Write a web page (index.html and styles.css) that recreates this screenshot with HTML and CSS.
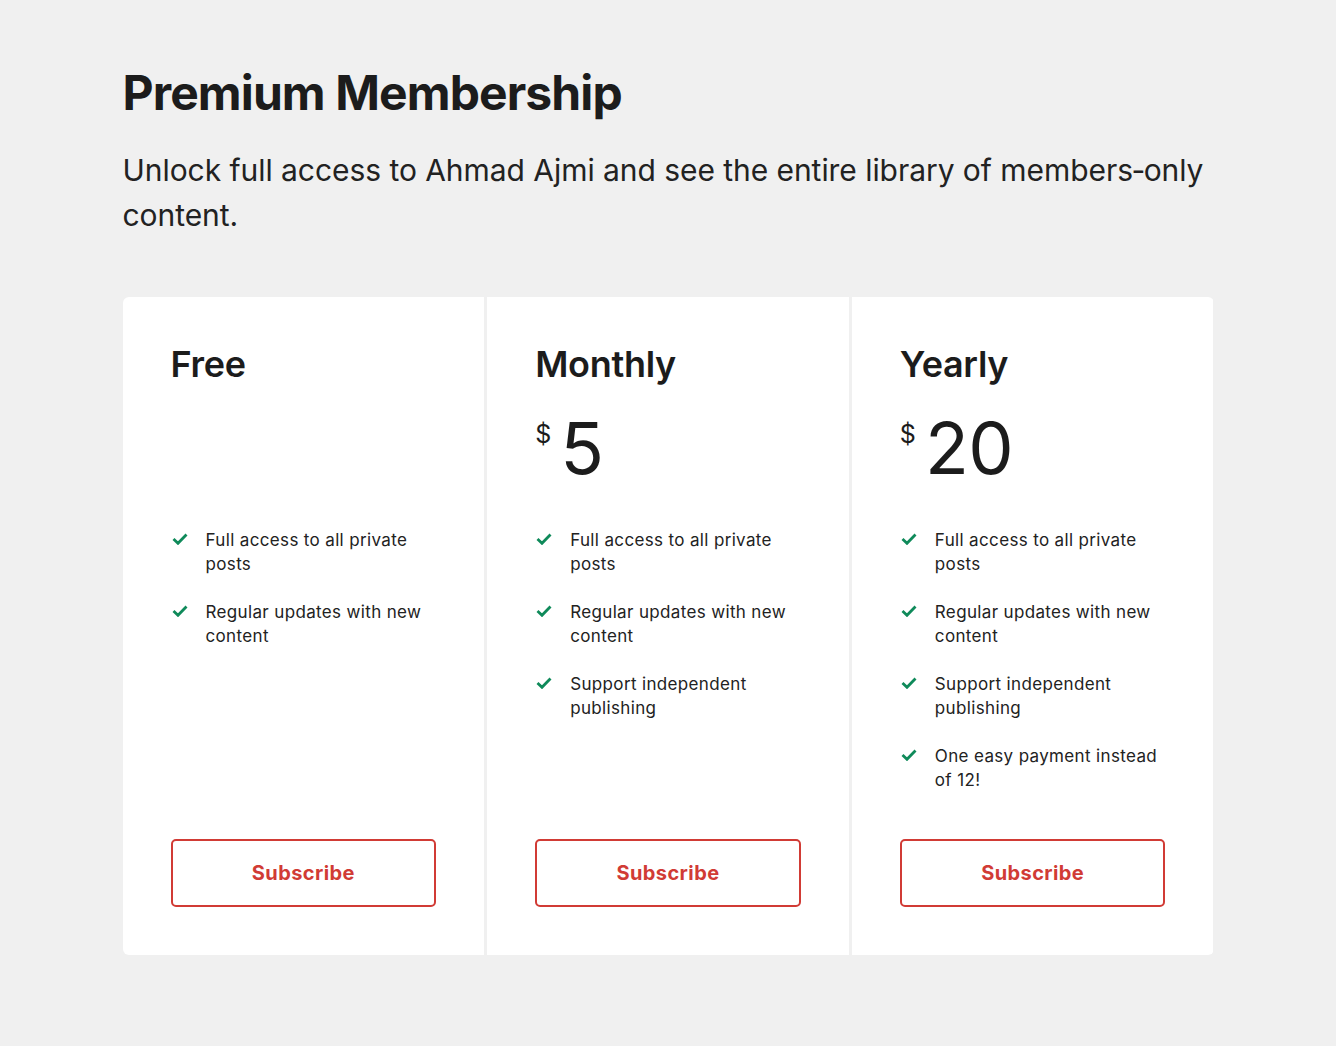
FILE: index.html
```html
<!DOCTYPE html>
<html lang="en">

<head>
    <meta charset="UTF-8">
    <meta name="viewport" content="width=device-width, initial-scale=1.0">
    <title>Premium Membership</title>
    <link rel="stylesheet" href="styles.css">
</head>

<body>

    <div class="container">
        <h1>Premium Membership</h1>
        <p class="lead">Unlock full access to Ahmad Ajmi and see the entire library of members&#8209;only content.</p>

        <div class="plans">

            <!-- Free -->
            <div class="plan">
                <h2>Free</h2>
                <div class="price"></div>
                <ul class="features">
                    <li><svg class="check" viewBox="0 0 16 12"><path d="M1.5 6l4.5 4.3 8.5-8.8"/></svg>Full access to all private posts</li>
                    <li><svg class="check" viewBox="0 0 16 12"><path d="M1.5 6l4.5 4.3 8.5-8.8"/></svg>Regular updates with new content</li>
                </ul>
                <a class="subscribe" href="#">Subscribe</a>
            </div>

            <!-- Monthly -->
            <div class="plan">
                <h2>Monthly</h2>
                <div class="price"><span class="currency">$</span><span class="amount">5</span></div>
                <ul class="features">
                    <li><svg class="check" viewBox="0 0 16 12"><path d="M1.5 6l4.5 4.3 8.5-8.8"/></svg>Full access to all private posts</li>
                    <li><svg class="check" viewBox="0 0 16 12"><path d="M1.5 6l4.5 4.3 8.5-8.8"/></svg>Regular updates with new content</li>
                    <li><svg class="check" viewBox="0 0 16 12"><path d="M1.5 6l4.5 4.3 8.5-8.8"/></svg>Support independent publishing</li>
                </ul>
                <a class="subscribe" href="#">Subscribe</a>
            </div>

            <!-- Yearly -->
            <div class="plan">
                <h2>Yearly</h2>
                <div class="price"><span class="currency">$</span><span class="amount">20</span></div>
                <ul class="features">
                    <li><svg class="check" viewBox="0 0 16 12"><path d="M1.5 6l4.5 4.3 8.5-8.8"/></svg>Full access to all private posts</li>
                    <li><svg class="check" viewBox="0 0 16 12"><path d="M1.5 6l4.5 4.3 8.5-8.8"/></svg>Regular updates with new content</li>
                    <li><svg class="check" viewBox="0 0 16 12"><path d="M1.5 6l4.5 4.3 8.5-8.8"/></svg>Support independent publishing</li>
                    <li><svg class="check" viewBox="0 0 16 12"><path d="M1.5 6l4.5 4.3 8.5-8.8"/></svg>One easy payment instead of 12!</li>
                </ul>
                <a class="subscribe" href="#">Subscribe</a>
            </div>

        </div>
    </div>

</body>

</html>
```

FILE: styles.css
```css
* {
    box-sizing: border-box;
}

body {
    font-family: Inter, "Noto Sans", sans-serif;
    background-color: #f0f0f0;
    color: #1c1c1c;
    margin: 0;
    padding: 0;
}

.container {
    width: 1091px;
    margin: 0 auto;
    padding-top: 64px;
}

h1 {
    font-size: 48px;
    font-weight: 700;
    letter-spacing: -0.9px;
    line-height: 1.2;
    margin: 0;
}

.lead {
    font-size: 30px;
    line-height: 45px;
    margin: 26px 0 0;
    letter-spacing: -0.05px;
    color: #222;
}

.plans {
    display: grid;
    grid-template-columns: repeat(3, 1fr);
    gap: 3px;
    margin-top: 59px;
    border-radius: 6px;
    overflow: hidden;
}

.plan {
    background-color: #fff;
    padding: 45px 48px 48px;
    display: flex;
    flex-direction: column;
    min-height: 658px;
}

.plan h2 {
    font-size: 36px;
    font-weight: 600;
    line-height: 44px;
    margin: 0;
    letter-spacing: -0.3px;
}

.price {
    display: flex;
    align-items: flex-start;
    height: 85px;
    margin-top: 26px;
}

.currency {
    font-size: 25px;
    line-height: 1;
    margin-top: 10px;
    margin-right: 9px;
}

.amount {
    font-size: 72px;
    line-height: 1;
    letter-spacing: -0.5px;
}

.features {
    list-style: none;
    margin: 31px 0 0;
    padding: 0;
    flex: 1;
}

.features li {
    position: relative;
    padding-left: 35px;
    font-size: 17px;
    line-height: 24px;
    letter-spacing: 0.35px;
    margin-bottom: 24px;
    color: #222;
}

.check {
    position: absolute;
    left: 1px;
    top: 5px;
    width: 16px;
    height: 12px;
    fill: none;
    stroke: #0f8a5a;
    stroke-width: 2.8;
}

.subscribe {
    display: block;
    height: 68px;
    line-height: 64px;
    text-align: center;
    border: 2px solid #d13b35;
    border-radius: 5px;
    color: #d13b35;
    font-size: 20px;
    font-weight: 700;
    letter-spacing: 0.4px;
    text-decoration: none;
}
```
